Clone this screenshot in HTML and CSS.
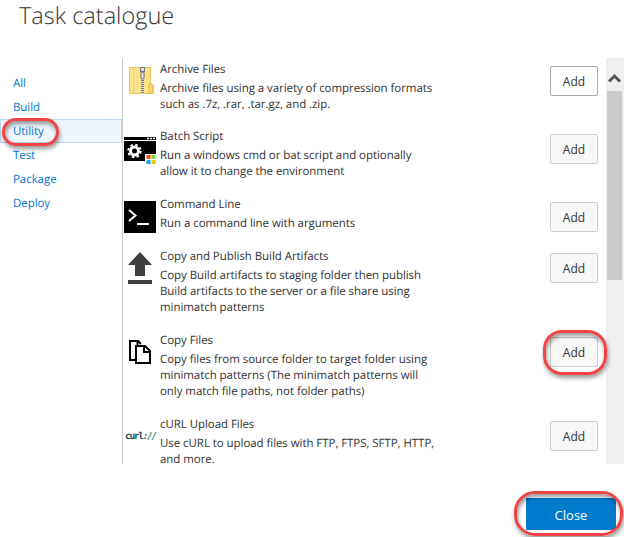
FILE: index.html
```html
<!DOCTYPE html>
<html lang="en">
<head>
<meta charset="utf-8">
<title>Task catalogue</title>
<link rel="stylesheet" href="styles.css">
</head>
<body>
<main class="dialog">
  <h1 class="heading">Task catalogue</h1>
  <div class="content">
    <nav class="categories">
      <a class="category">All</a>
      <a class="category">Build</a>
      <a class="category selected">Utility<span class="ring ring-utility"></span></a>
      <a class="category">Test</a>
      <a class="category">Package</a>
      <a class="category">Deploy</a>
    </nav>
    <section class="tasks">
      <article class="task">
        <svg class="icon" viewBox="0 0 32 36">
          <path d="M5.500 3.500h21v16l2.500 2v8H5.500z" fill="#fbe38e" stroke="#e9c45c"/>
          <path d="M25 20.500l1.500-2 2.500 3v8h-4z" fill="#f9d66a" stroke="#e3b94a"/>
          <path d="M9.500 4v25" stroke="#f5d573"/>
          <path d="M18.500 3v27" stroke="#777" stroke-width="3"/>
          <path d="M18.500 15v15" stroke="#e8e2cc" stroke-width="3" stroke-dasharray="1 1"/>
          <rect x="16.500" y="3.500" width="4" height="4" fill="#ddd" stroke="#777"/>
          <rect x="17" y="8" width="3" height="7" rx="1" fill="#eee" stroke="#666"/>
        </svg>
        <div class="info"><h2>Archive Files</h2><p>Archive files using a variety of compression formats<br>such as .7z, .rar, .tar.gz, and .zip.</p></div>
        <button class="add first">Add</button>
      </article>
      <article class="task">
        <svg class="icon" viewBox="0 0 32 36">
          <path d="M0 5h32v3H0zM0 9h32v20H0z" fill="#000"/>
          <path d="M23 6.500h8" stroke="#fff" stroke-width="1.500" stroke-dasharray="2 1"/>
          <circle cx="10.500" cy="19" r="4" fill="none" stroke="#fff" stroke-width="3"/>
          <circle cx="10.500" cy="19" r="6.200" fill="none" stroke="#fff" stroke-width="2" stroke-dasharray="2.400 2.470"/>
          <path d="M21 22h11v10H21z" fill="#fff"/>
          <path d="M22.500 23h4v4h-4z" fill="#f1511b"/><path d="M27.500 23h4v4h-4z" fill="#80cc28"/>
          <path d="M22.500 28h4v4h-4z" fill="#00adef"/><path d="M27.500 28h4v4h-4z" fill="#fbbc09"/>
        </svg>
        <div class="info"><h2>Batch Script</h2><p>Run a windows cmd or bat script and optionally<br>allow it to change the environment</p></div>
        <button class="add">Add</button>
      </article>
      <article class="task">
        <svg class="icon" viewBox="0 0 32 36">
          <path d="M0 1h32v32H0z" fill="#000"/>
          <path d="M5 10l6.500 5.500L5 21M13 24h12" fill="none" stroke="#fff" stroke-width="2"/>
        </svg>
        <div class="info"><h2>Command Line</h2><p>Run a command line with arguments</p></div>
        <button class="add">Add</button>
      </article>
      <article class="task">
        <svg class="icon" viewBox="0 0 32 36">
          <path d="M16 1l12 13h-7v11H11V14H4zM4 29h24v4H4z" fill="#404040"/>
        </svg>
        <div class="info"><h2>Copy and Publish Build Artifacts</h2><p>Copy Build artifacts to staging folder then publish<br>Build artifacts to the server or a file share using<br>minimatch patterns</p></div>
        <button class="add">Add</button>
      </article>
      <article class="task">
        <svg class="icon" viewBox="0 0 32 36">
          <path d="M11 25H6V6h8l3 3M13.500 6v5" fill="none" stroke="#000" stroke-width="2"/>
          <path d="M12 11h9l5 5v12H12zM20 11v6h6" fill="#fff" stroke="#000" stroke-width="2"/>
        </svg>
        <div class="info"><h2>Copy Files</h2><p>Copy files from source folder to target folder using<br>minimatch patterns (The minimatch patterns will<br>only match file paths, not folder paths)</p></div>
        <button class="add">Add<span class="ring ring-add"></span></button>
      </article>
      <article class="task">
        <span class="icon curl">curl<i>://</i></span>
        <div class="info"><h2>cURL Upload Files</h2><p>Use cURL to upload files with FTP, FTPS, SFTP, HTTP,<br>and more.</p></div>
        <button class="add">Add</button>
      </article>
    </section>
    <div class="scrollbar">
      <svg class="arrow" viewBox="0 0 18 33"><path d="M3 23.500L8.500 18l5.500 5.500" fill="none" stroke="#555" stroke-width="3"/></svg>
      <div class="thumb"></div>
    </div>
  </div>
  <footer class="footer"><button class="close">Close<span class="ring ring-close"></span></button></footer>
</main>
</body>
</html>
```
FILE: styles.css
```css
* { box-sizing: border-box; }
body { margin: 0; background: #fff; color: #333; font: 11.500px/16px "Open Sans", "Noto Sans", sans-serif; letter-spacing: -.06px; overflow: hidden; text-rendering: geometricPrecision; }
.dialog { width: 624px; height: 537px; overflow: hidden; }
.heading { margin: 0; height: 58px; padding-left: 19px; font-size: 23.500px; line-height: 31px; font-weight: 300; letter-spacing: 0; }
.content { display: flex; height: 406px; }
.categories { width: 122px; padding-top: 13px; }
.category { display: block; position: relative; height: 24px; padding-left: 13px; line-height: 26px; color: #0078d0; }
.selected { background: #f0f6fe; box-shadow: inset 0 0 0 1px #b9d6f5; }
.tasks { width: 484px; border-left: 1px solid #ccc; padding: 3px 8px 0 1px; }
.task { display: flex; padding-bottom: 16.100px; }
.icon { display: block; width: 32px; height: 36px; margin: 3px 0 -10px; flex: none; }
.info { width: 395px; padding: .700px 0 0 4px; white-space: nowrap; }
h2 { margin: 0 0 3px; font-size: 11.500px; font-weight: 400; }
p { margin: 0; }
.add { position: relative; flex: none; width: 48px; height: 30px; margin: 5px 0 0 -1px; padding: 2px 0 0; border: 1px solid #ccc; border-radius: 2px; background: #f8f8f8; color: #333; font: 12px/16px "Open Sans", sans-serif; }
.task .add { margin-bottom: -6px; }
.first { background: #fff; border-color: #aaa; }
.curl { padding: 11px 0 0 1px; font: 700 9.500px/14px "DejaVu Sans Mono", monospace; letter-spacing: -1.300px; color: #174f68; }
.curl i { color: #397f70; }
.scrollbar { width: 18px; background: #efefef; }
.arrow { display: block; width: 18px; height: 33px; }
.thumb { width: 15px; height: 189px; margin-left: 1px; background: #cbcbcb; }
.footer { display: flex; justify-content: flex-end; padding: 34px 8px 0 0; }
.close { position: relative; width: 90px; height: 32px; border: 0; padding: 2px 0 0; background: #007acc; color: #fff; font: 13px/18px "Open Sans", sans-serif; }
.ring { position: absolute; border: 3px solid #f04444; box-shadow: 1px 3px 4px rgba(0,0,0,.4), inset 1px 3px 4px rgba(0,0,0,.4); }
.ring-utility { left: 2px; top: -1px; width: 57px; height: 28px; border-radius: 15px; }
.ring-add { left: -8px; top: -8px; width: 64px; height: 45px; border-radius: 19px; }
.ring-close { left: -12px; top: -7px; width: 109px; height: 45px; border-radius: 21px; }
```
